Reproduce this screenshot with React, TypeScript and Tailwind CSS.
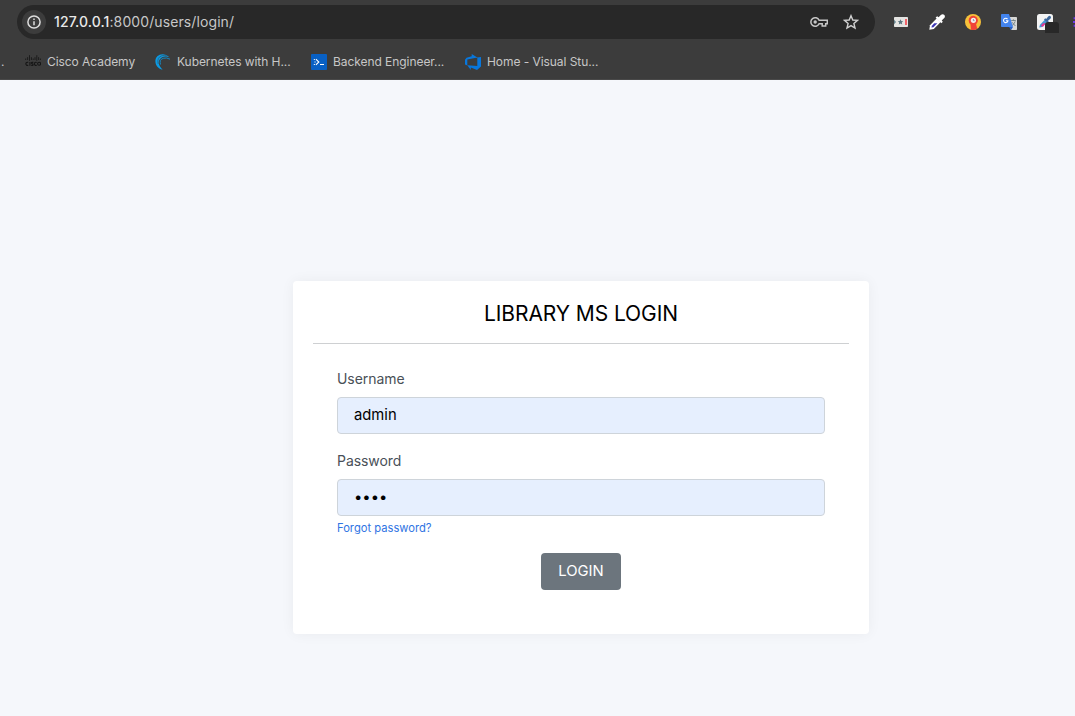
import React from "react";

function InfoIcon() {
  return (
    <svg width="14" height="14" viewBox="0 0 14 14" fill="none">
      <circle cx="7" cy="7" r="6.1" stroke="#dedede" strokeWidth="1.5" />
      <path d="M7 6.2V10.3" stroke="#dedede" strokeWidth="1.5" />
      <path d="M7 3.6V5.1" stroke="#dedede" strokeWidth="1.5" />
    </svg>
  );
}

function KeyIcon() {
  return (
    <svg width="18" height="12" viewBox="0 0 18 12" fill="none">
      <path
        d="M9.1 4.3A4.3 4.3 0 1 0 9.1 7.7H12.2V10.1H15.7V7.7H17.3V4.3Z"
        stroke="#c7c7c7"
        strokeWidth="1.5"
      />
      <circle cx="5.2" cy="6" r="1.7" fill="#c7c7c7" />
    </svg>
  );
}

function StarIcon() {
  return (
    <svg width="16" height="16" viewBox="0 0 16 16" fill="none">
      <path
        d="M8 1.7L9.8 6L14.5 6.4L10.9 9.5L12 14.1L8 11.6L4 14.1L5.1 9.5L1.5 6.4L6.2 6Z"
        stroke="#d0d0d0"
        strokeWidth="1.4"
      />
    </svg>
  );
}

function TicketIcon() {
  return (
    <svg width="16" height="16" viewBox="0 0 16 16">
      <rect x="1" y="3" width="14" height="10" rx="0.8" fill="#e4e4e2" />
      <path d="M1 5.5L3 8L1 10.5Z" fill="#67838d" />
      <path d="M7.5 5.3L8.3 7.1L10.2 7.3L8.8 8.6L9.2 10.5L7.5 9.5L5.8 10.5L6.2 8.6L4.8 7.3L6.7 7.1Z" fill="#59747f" />
      <rect x="12.2" y="5" width="1.6" height="6" fill="#f3444b" />
    </svg>
  );
}

function DropperIcon() {
  return (
    <svg width="16" height="16" viewBox="0 0 16 16">
      <path d="M0.3 15.7L1 11.2L7.8 4.3L11.7 8.1L4.8 14.9Z" fill="#fff" />
      <path d="M2.4 13.5L2.9 11.7L5.3 9.3H8.4L4.4 13.2Z" fill="#3d37b5" />
      <path d="M6.6 3.6L8.2 2.2L9.6 3.3L11.8 0.9Q13.9 -0.6 15.4 1.1Q16.6 2.6 15 4.2L12.7 6.4L13.8 7.8L12.4 9.3Z" fill="#fff" />
    </svg>
  );
}

function PickerIcon() {
  return (
    <svg width="16" height="16" viewBox="0 0 16 16">
      <circle cx="8" cy="8" r="8" fill="#f7c13a" />
      <path d="M3.7 6.8A4.6 4.6 0 1 1 12 9.1L11.1 10.2L12.2 14.8Q9 16.8 6 15.7L5.5 10.4Q3.7 9 3.7 6.8Z" fill="#f04438" />
      <circle cx="8.4" cy="6.3" r="2.6" fill="#f4eeee" />
      <path d="M8.4 5V6.6H9.5" stroke="#77869a" strokeWidth="0.8" fill="none" />
    </svg>
  );
}

function TranslateIcon() {
  return (
    <svg width="16" height="16" viewBox="0 0 16 16">
      <path d="M6 3H15.2Q16 3 16 3.8V15.2Q16 16 15.2 16H10Z" fill="#d7d7d5" />
      <path d="M10.2 6.5H14.8M12.4 5.3V6.5M11 8.2L14.4 12M14.2 7.3Q13.4 10 11 11.6" stroke="#728083" strokeWidth="0.9" fill="none" />
      <path d="M0 0.8Q0 0 0.8 0H8L12 13H0.8Q0 13 0 12.2Z" fill="#4384ee" />
      <path d="M8 13H12L10.2 16Z" fill="#2860c5" />
      <path d="M6.5 5.1A2.2 2.2 0 1 0 6.9 6.8H4.9" stroke="#fff" strokeWidth="1.1" fill="none" />
    </svg>
  );
}

function ColorToolIcon() {
  return (
    <svg width="22" height="22" viewBox="0 0 22 22">
      <rect x="0" y="0" width="16" height="16" rx="2.5" fill="#f3f4f4" />
      <path d="M2.2 13.6L3 10.8L8 5.5L10.4 7.9L5.2 13Z" fill="#4598d6" />
      <path d="M3.8 11.9L6 9.3H8.8L6 12.7Z" fill="#e93790" />
      <path d="M7 5.5L8.3 4.3L9.2 5L11.2 2.4Q12.7 1.2 13.7 2.4Q14.5 3.4 13.4 4.7L11 6.8L11.7 7.6L10.6 8.9Z" fill="#3d679b" />
      <rect x="8" y="8" width="14" height="14" rx="3" fill="#282828" />
    </svg>
  );
}

function SparkIcon() {
  return (
    <svg width="2" height="16" viewBox="0 0 2 16">
      <path d="M0.6 4.3H2M0 8H2M0.6 11.7H2" stroke="#6d36e8" strokeWidth="2" />
    </svg>
  );
}

function CiscoIcon() {
  return (
    <svg width="16" height="16" viewBox="0 0 16 16" fill="none" stroke="#161616">
      <path
        d="M0.7 4.5V6M2.6 3.2V6M4.5 1.2V6.8M6.4 3.2V6M8.2 4.5V6M10 3.2V6M11.8 1.2V6.8M13.6 3.2V6M15.4 4.5V6"
        strokeWidth="0.85"
      />
      <path
        d="M3.2 8.4A1.6 1.6 0 1 0 3.2 11.2M4.9 7.9V11.8M8.3 8.4H7.1Q6.3 8.5 6.4 9.2L7.8 10.1Q8.6 11.2 7.4 11.4H6.2M11.7 8.4A1.6 1.6 0 1 0 11.7 11.2"
        strokeWidth="1.1"
      />
      <circle cx="14.1" cy="9.8" r="1.5" strokeWidth="1.1" />
    </svg>
  );
}

function SwirlIcon() {
  return (
    <svg width="16" height="16" viewBox="0 0 16 16" fill="none">
      <path d="M7.6 15.7C-1.3 13.6 -2.1 2.1 6 0.6Q10.3 -0.5 14.5 3.3Q7.8 1 4.7 5.5Q1.9 10 7.6 15.7Z" fill="#0b9ae3" />
      <path d="M3.2 10Q1.6 3.2 7 1.7Q9.7 0.9 12 2" stroke="#3c3c3c" strokeWidth="0.5" />
      <path d="M5.5 10.5Q4 5.5 8.3 4.3Q11.5 3.2 15 5.2" stroke="#0b9ae3" strokeWidth="0.8" />
    </svg>
  );
}

function TerminalIcon() {
  return (
    <svg width="16" height="16" viewBox="0 0 16 16" fill="none">
      <rect width="16" height="16" rx="1" fill="#0860c4" />
      <path d="M4.9 5.2L7.8 8L4.9 10.8M9 10.5H13" stroke="#fff" strokeWidth="1.1" />
      <path d="M2.8 5.5H3.9M3.5 8H4.6M2.8 10.5H3.9" stroke="#fff" strokeWidth="1" />
    </svg>
  );
}

function DevOpsIcon() {
  return (
    <svg width="16" height="16" viewBox="0 0 16 16">
      <path
        d="M16 3V12.6L12 15.9L5.8 13.6V15.9L2.3 11.3L12.3 12.1V3.5ZM12.4 3.6L6.7 0V2.3L1.5 3.8L0 5.8V10.4L2.3 11.4V5.6Z"
        fill="#0877dc"
      />
    </svg>
  );
}

function Bookmark({ icon, label, className }: { icon: React.ReactNode; label: string; className: string }) {
  return (
    <div className={`flex shrink-0 items-center whitespace-nowrap ${className}`}>
      {icon}
      <span>{label}</span>
    </div>
  );
}

function BrowserBar() {
  return (
    <header className="h-20 overflow-hidden border-b border-[#494949] bg-[#3c3c3c] pt-[5px]">
      <div className="flex h-[34px] items-center pl-[17px]">
        <div className="flex h-[34px] w-[858px] items-center rounded-full bg-[#282828] pl-[5px] pr-4">
          <div className="flex size-6 items-center justify-center rounded-full bg-[#3c3c3c]">
            <InfoIcon />
          </div>
          <div className="mb-px ml-2 text-[14px] tracking-[0.1px] text-[#c7c7c7]">
            <span className="font-medium text-[#e8e8e8]">127.0.0.1</span>:8000/users/login/
          </div>
          <div className="ml-auto flex items-center gap-[15px]">
            <KeyIcon />
            <StarIcon />
          </div>
        </div>
        <div className="ml-[18px] flex w-[182px] items-center overflow-hidden">
          <div className="flex shrink-0 items-center gap-5">
            <TicketIcon />
            <DropperIcon />
            <PickerIcon />
            <TranslateIcon />
          </div>
          <div className="ml-5 h-[22px] shrink-0">
            <div className="pt-[3px]">
              <ColorToolIcon />
            </div>
          </div>
          <div className="ml-[14px] shrink-0">
            <SparkIcon />
          </div>
        </div>
      </div>
      <nav className="flex h-[46px] items-center text-[12px] tracking-[-0.06px] text-[#c7c7c7]">
        <span className="w-[25px] shrink-0 pl-px">.</span>
        <Bookmark icon={<CiscoIcon />} label="Cisco Academy" className="w-[130px] gap-[6px]" />
        <Bookmark icon={<SwirlIcon />} label="Kubernetes with H..." className="w-[156px] gap-[6px]" />
        <Bookmark icon={<TerminalIcon />} label="Backend Engineer..." className="w-[154px] gap-[6px]" />
        <Bookmark icon={<DevOpsIcon />} label="Home - Visual Stu..." className="w-[150px] gap-[6px]" />
      </nav>
    </header>
  );
}

function Field({ label, type, value }: { label: string; type: string; value: string }) {
  return (
    <label className="flex flex-col text-[14px] tracking-[-0.06px] text-[#495057]">
      <span className="mb-2 leading-[20px]">{label}</span>
      <input
        type={type}
        defaultValue={value}
        className="h-[37px] rounded-[4px] border border-[#ced4da] bg-[#e6effe] px-4 pb-[2px] text-[14.8px] tracking-normal text-black outline-none"
      />
    </label>
  );
}

export default function App() {
  return (
    <div className="flex h-[716px] w-[1075px] flex-col overflow-hidden bg-[#f5f7fb] font-['Inter','Liberation_Sans',sans-serif]">
      <BrowserBar />
      <main className="flex flex-1 items-start pl-[293px] pt-[201px]">
        <form className="h-[353px] w-[576px] rounded-[4px] bg-white px-5 shadow-[0_0_14px_rgba(33,37,41,0.05)]">
          <h1 className="h-[63px] border-b border-[#ced0d2] pt-[18px] text-center text-[21px] leading-[30px] tracking-[-0.08px] text-black">
            LIBRARY MS LOGIN
          </h1>
          <div className="flex flex-col px-6 pt-[25px]">
            <Field label="Username" type="text" value="admin" />
            <div className="h-[17px]" />
            <Field label="Password" type="password" value="1234" />
            <a className="mt-1 self-start text-[11.2px] leading-[17px] text-[#2f74e3]" href="#">
              Forgot password?
            </a>
            <button type="button" className="mt-4 h-[37px] w-20 self-center rounded-[4px] bg-[#6c757d] text-[14.8px] text-white">
              LOGIN
            </button>
          </div>
        </form>
      </main>
    </div>
  );
}
